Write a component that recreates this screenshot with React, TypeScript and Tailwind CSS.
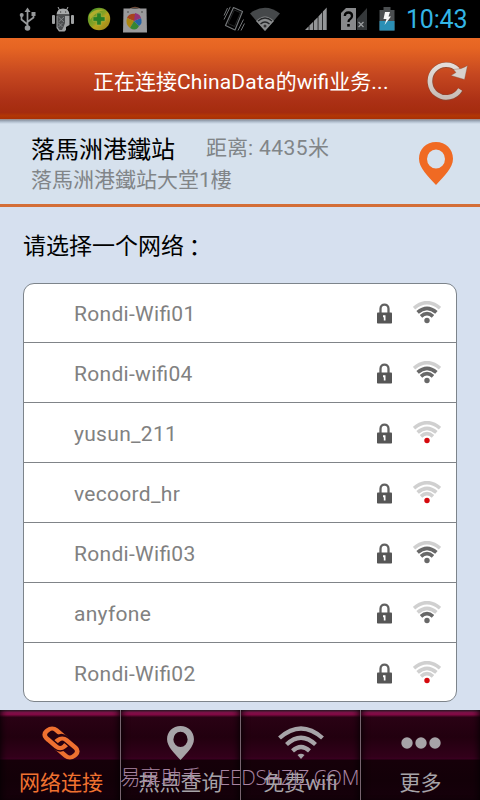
import React from "react";

const FONT = "font-[Roboto,'Noto_Sans_CJK_SC',sans-serif]";
const FONT_TC = "font-[Roboto,'Noto_Sans_CJK_TC',sans-serif]";

const networks = [
  { name: "Rondi-Wifi01", level: 3 },
  { name: "Rondi-wifi04", level: 3 },
  { name: "yusun_211", level: 0 },
  { name: "vecoord_hr", level: 0 },
  { name: "Rondi-Wifi03", level: 3 },
  { name: "anyfone", level: 2 },
  { name: "Rondi-Wifi02", level: 0 },
];

function UsbIcon() {
  return (
    <svg width="18" height="26" viewBox="0 0 18 26" fill="none" stroke="#96989a" strokeWidth="1.7">
      <path d="M8.5 5V22M2.5 10V13.5L8.5 18.5M14.5 8V11.5L8.5 16" />
      <path d="M8.5 1.5L11.5 6H5.500Z" fill="#96989a" stroke="none" />
      <circle cx="2.700" cy="9" r="2" fill="#96989a" stroke="none" />
      <rect x="12.500" y="6" width="4" height="4" fill="#96989a" stroke="none" />
      <circle cx="8.500" cy="22" r="2.800" fill="#96989a" stroke="none" />
    </svg>
  );
}

function AndroidIcon() {
  return (
    <svg width="24" height="28" viewBox="0 0 24 28">
      <path d="M7 2L8.500 5M17 2L15.500 5" stroke="#a8aaab" />
      <path d="M5.500 9.500Q6 3.500 12 3.500T18.500 9.500Z" fill="#a8aaab" />
      <path d="M5.500 10.500H18.500V20L15 22V25L13.500 26.500H8L5.500 23Z" fill="#a0a2a3" />
      <path d="M6.500 11H14V18L12.500 22L11 25H8.500L6.500 22Z" fill="#4b4d4f" />
      <path d="M7.500 12l5.500 5m0-5l-5.500 5m0 1l4 4m0-4l-4 4" stroke="#8c8f91" strokeWidth=".8" />
      <rect x="1" y="10" width="3" height="9" rx="1" fill="#a0a2a3" />
      <rect x="20" y="10" width="3" height="9" rx="1" fill="#a0a2a3" />
      <path d="M9 7h1.200M14 7h1.200" stroke="#333" />
    </svg>
  );
}

function SecurityIcon() {
  return (
    <svg width="24" height="24" viewBox="0 0 24 24">
      <defs>
        <linearGradient id="sec" x1="0" y1="0" x2="1" y2="1">
          <stop offset="0" stopColor="#3d8e28" />
          <stop offset=".48" stopColor="#88a224" />
          <stop offset=".58" stopColor="#b9a31e" />
          <stop offset="1" stopColor="#948019" />
        </linearGradient>
      </defs>
      <circle cx="12" cy="12" r="11.200" fill="url(#sec)" />
      <path d="M2 8Q8 1 18 3Q9 4 3 13Z" fill="#b0ad2d" />
      <path d="M9.700 6H14.300V9.700H18V14.300H14.300V18H9.700V14.300H6V9.700H9.700Z" fill="#298025" stroke="#b9b841" strokeWidth=".6" />
    </svg>
  );
}

function StoreIcon() {
  return (
    <svg width="26" height="28" viewBox="0 0 26 28">
      <path d="M8 4Q13 .8 18 4" fill="none" stroke="#6d4a38" strokeWidth="1.400" />
      <path d="M1.500 3.500H24.500L25 27.500H1Z" fill="#9a9a9c" />
      <circle cx="6" cy="7" r="1" fill="#666" /><circle cx="20" cy="7" r="1" fill="#666" />
      <path d="M12 16L5 13Q7 8 14 9L18 11Z" fill="#a8431d" />
      <path d="M12 16L5 13Q3 19 8 23Z" fill="#ad8710" />
      <path d="M12 16L8 23Q14 27 17 21Z" fill="#368633" />
      <path d="M12 16L17 21Q21 18 19 13Z" fill="#2562a3" />
      <path d="M12 16L19 13Q18 9 13 8Z" fill="#923277" />
    </svg>
  );
}

function VibrateIcon() {
  return (
    <svg width="24" height="26" viewBox="0 0 24 26" fill="none" stroke="#727577" strokeWidth="1.200" strokeLinejoin="round">
      <path d="M11.500 1.500L20.500 5.500L13 24L3.500 19.500Z" />
      <path d="M12.300 4L18.500 6.700L12.500 20.500L6 17.500Z" stroke="#2c2e2f" strokeWidth=".8" />
      <path d="M2 9.500L5.500 2M2 13.500L8.300 .8M16 24.500L21.500 13.500M19 24.500L22.500 17.500" strokeWidth="1" />
    </svg>
  );
}

function StatusWifi() {
  return (
    <svg width="32" height="25" viewBox="0 0 32 25">
      <path d="M1 6.500Q16 -5 31 6.500L16 24Z" fill="#45484a" />
      <path d="M7 14Q16 5 25 14L16 24Z" fill="#8b8d8e" />
      <path d="M9 14Q16 8 23 14M11.500 17Q16 13 20.500 17" stroke="#242628" fill="none" strokeWidth="1.400" />
      <circle cx="16" cy="19" r="1.500" fill="#333" />
    </svg>
  );
}

function SignalIcon() {
  return (
    <svg width="22" height="24" viewBox="0 0 22 24" fill="#949698">
      <path d="M0 23L3.700 19.300V23ZM4.400 18.600L8.200 14.800V23H4.400ZM8.900 14L12.700 10.200V23H8.900ZM13.400 9.500L17.200 5.300V23H13.400ZM17.900 4.500L21.700 .5V23H17.900Z" />
    </svg>
  );
}

function SimIcon() {
  return (
    <svg width="27" height="24" viewBox="0 0 27 24">
      <path d="M5 1H15V23H0V6Z" fill="#88898b" />
      <path d="M26 1V23H16V12Z" fill="#35383a" />
      <path d="M3.800 9Q4 5.500 7.500 5.500T11 9Q11 11 9 12.300Q7.500 13 7.500 15" fill="none" stroke="#050505" strokeWidth="2.300" />
      <rect x="6.200" y="17" width="2.600" height="2.600" fill="#050505" />
      <path d="M17.500 15L22.500 20M22.500 15L17.500 20" stroke="#9b9d9f" strokeWidth="1.300" />
    </svg>
  );
}

function BatteryIcon() {
  return (
    <svg width="16" height="24" viewBox="0 0 16 24">
      <path d="M4.500 0H11.500V3H15.500V23.500H.5V3H4.500Z" fill="#4b4e50" />
      <path d="M.5 14H15.500V23.500H.5Z" fill="#2b8fb5" />
      <path d="M6 5H11L9.500 9.500H12L5.500 18L7.500 12H4.500Z" fill="#f7f7f7" />
    </svg>
  );
}

function RefreshIcon() {
  return (
    <svg width="42" height="42" viewBox="0 0 42 42">
      <defs>
        <linearGradient id="silver" x1="0" y1="0" x2="0" y2="1">
          <stop offset="0" stopColor="#e4deda" />
          <stop offset="1" stopColor="#c8beb8" />
        </linearGradient>
      </defs>
      <path d="M33.500 29.500A16.300 16.300 0 1 1 30.500 9.300" fill="none" stroke="#7c5040" strokeOpacity=".6" strokeWidth="6" />
      <path d="M33.200 29.500A16.300 16.300 0 1 1 31 9.800" fill="none" stroke="url(#silver)" strokeWidth="4.600" />
      <path d="M40.500 5.500L37.500 19.500L24 15.500L29 12.500L26.500 9.500Q35 9.500 40.500 5.500Z" fill="#d8d2cd" stroke="#7c5040" strokeOpacity=".5" strokeWidth=".7" />
    </svg>
  );
}

function PinIcon({ className }: { className: string }) {
  return (
    <svg viewBox="0 0 34 43" className={className} fill="currentColor">
      <path fillRule="evenodd" d="M17 0C7.200 0 0 7.200 0 16.700C0 26 9 34 17 43C25 34 34 26 34 16.700C34 7.200 26.800 0 17 0ZM17 7.400A9 9.600 0 1 1 17 26.600A9 9.600 0 1 1 17 7.400Z" />
    </svg>
  );
}

function LockIcon() {
  return (
    <svg width="15" height="21" viewBox="0 0 15 21">
      <path d="M3.500 11V5.800C3.500 .2 11.500 .2 11.500 5.800V11" fill="none" stroke="#626262" strokeWidth="2.300" />
      <rect x="0" y="9.500" width="15" height="11" rx=".8" fill="#565656" />
      <path d="M6 12.200H8.500V17.500H6.800V14.200H6Z" fill="#fff" />
    </svg>
  );
}

function WifiLevel({ level }: { level: number }) {
  const on = "#686868";
  const off = "#d0d0d0";
  return (
    <svg width="28" height="25" viewBox="0 0 28 25" fill="none">
      <path d="M1 7.200Q14 -3.800 27 7.200" stroke={off} strokeWidth="3.600" />
      <path d="M4.600 11.400Q14 3.200 23.400 11.400" stroke={level > 2 ? on : off} strokeWidth="3.700" />
      <path d="M8 15.400Q14 9.800 20 15.400" stroke={level > 1 ? on : off} strokeWidth="3.600" />
      <circle cx="14" cy="19.500" r="2.700" fill={level > 0 ? on : "#d5090d"} />
    </svg>
  );
}

function LinkIcon() {
  return (
    <svg width="38" height="36" viewBox="0 0 38 36" fill="none" stroke="#ee7030" strokeWidth="4.300">
      <g transform="translate(19 18) scale(1.14 .97) rotate(45) translate(-19 -18)">
        <rect x="1.500" y="11.500" width="22" height="12" rx="5" />
        <path d="M14 13.500V17Q14 12.500 19 12.500H31" stroke="#260010" strokeWidth="7" />
        <rect x="15" y="12.500" width="21.500" height="12" rx="5" />
        <path d="M23.500 17.500V19Q23.500 23.500 18.500 23.500H9" stroke="#260010" strokeWidth="6.800" />
        <path d="M23.500 16.500V18.500Q23.500 23.500 18.500 23.500H8" />
      </g>
    </svg>
  );
}

function NavWifi() {
  return (
    <svg width="46" height="34" viewBox="0 0 46 34" fill="none" stroke="#a7a4a8" strokeWidth="4.300">
      <path d="M1.500 12Q23 -7 44.500 12M8.500 18.500Q23 5 37.500 18.500M14.500 24.800Q23 17 31.500 24.800" />
      <path d="M19.500 29Q23 26.500 26.500 29L23 33Z" fill="#a7a4a8" stroke="none" />
    </svg>
  );
}

function DotsIcon() {
  return (
    <svg width="40" height="12" viewBox="0 0 40 12" fill="#a7a4a8">
      <circle cx="6" cy="6" r="5.700" /><circle cx="20" cy="6" r="5.700" /><circle cx="34" cy="6" r="5.700" />
    </svg>
  );
}

const tabs = [
  { label: "网络连接", icon: <LinkIcon />, active: true },
  { label: "热点查询", icon: <PinIcon className="h-[34px] w-[27px] text-[#a7a4a8]" />, active: false },
  { label: "免费wifi", icon: <NavWifi />, active: false },
  { label: "更多", icon: <DotsIcon />, active: false },
];

export default function App() {
  return (
    <div className={`flex h-[800px] w-[480px] flex-col overflow-hidden bg-[#d6e0ef] ${FONT}`}>
      <div className="flex h-[38px] shrink-0 items-center justify-between bg-black pl-[19px] pr-[13px]">
        <div className="flex items-center">
          <UsbIcon />
          <div className="ml-[14px]"><AndroidIcon /></div>
          <div className="ml-[12px]"><SecurityIcon /></div>
          <div className="ml-[11px]"><StoreIcon /></div>
        </div>
        <div className="flex items-center">
          <VibrateIcon />
          <div className="ml-[3px]"><StatusWifi /></div>
          <div className="ml-[24px]"><SignalIcon /></div>
          <div className="ml-[14px]"><SimIcon /></div>
          <div className="ml-[11px]"><BatteryIcon /></div>
          <span className="ml-[11px] w-[61px] whitespace-nowrap pt-[2px] text-[25px] leading-[36px] tracking-[-0.2px] text-[#33b5e5]">10:43</span>
        </div>
      </div>

      <header className="flex h-[81px] shrink-0 items-center bg-[linear-gradient(to_bottom,#eb6a25_0%,#e66523_12%,#c54720_45%,#ab3015_78%,#a52c0e_92%,#b23705_96%,#a83004_100%)] pl-[93px] pr-[11px]">
        <h1 className="grow whitespace-nowrap pt-[7px] text-[21px] leading-[28px] text-white">
          正在连接<span className="tracking-[0.2px]">ChinaData</span>的wifi业务<span className="tracking-[0.3px]">...</span>
        </h1>
        <div className="pt-[4px]"><RefreshIcon /></div>
      </header>
      <div className="h-[5px] shrink-0 bg-[linear-gradient(to_bottom,#a7887d,#929ba9_25%,#b4c1d0_60%,#d6e1ed)]" />

      <section className="flex h-[83px] shrink-0 justify-between border-b-[3px] border-[#d46e37] bg-[#d6e1ed] pl-[31px] pr-[27px]">
        <div className={`pt-[10px] ${FONT_TC}`}>
          <div className="flex h-[32px] items-start whitespace-nowrap">
            <span className="w-[175px] text-[24px] leading-[32px] text-black">落馬洲港鐵站</span>
            <span className={`text-[21px] leading-[28px] text-[#818588] ${FONT}`}>距离<span className="tracking-[0.4px]">: 4435</span>米</span>
          </div>
          <p className="text-[21px] leading-[28px] text-[#818588]">落馬洲港鐵站大堂1樓</p>
        </div>
        <PinIcon className="mt-[18px] h-[43px] w-[34px] text-[#f06a23]" />
      </section>

      <h2 className="flex h-[76px] shrink-0 pl-[23px] pt-[25px] text-[23px] leading-[30px] text-black">
        请选择一个网络<span className={`-ml-px pt-[2px] ${FONT_TC}`}>：</span>
      </h2>

      <ul className="mx-[23px] h-[419px] shrink-0 overflow-hidden rounded-[11px] border border-[#7d848b] bg-white">
        {networks.map((n, i) => (
          <li key={n.name} className={`flex h-[60px] items-center border-b pl-[50px] pr-[15px] pt-px ${i < 6 ? "border-[#808488]" : "border-transparent"} ${i === 0 ? "-mt-px" : ""}`}>
            <span className="grow pt-px text-[21px] leading-[28px] tracking-[0.3px] text-[#818181] [font-feature-settings:'liga']">{n.name}</span>
            <LockIcon />
            <div className="ml-[21px]"><WifiLevel level={n.level} /></div>
          </li>
        ))}
      </ul>

      <nav className="relative mt-auto grid h-[90px] shrink-0 grid-cols-4 bg-[linear-gradient(to_bottom,#37202f_0%,#85124b_3%,#830b45_5%,#2a0214_8%,#22000f_30%,#32001a_52%,#390020_54%,#160009_56%,#130008_78%,#16000b_100%)]">
        {tabs.map((t, i) => (
          <div key={t.label} className={`flex flex-col items-center shadow-[inset_5px_0_7px_-4px_#050003,inset_-5px_0_7px_-4px_#050003] ${i ? "border-l border-[#77636e]" : "pl-[2px]"}`}>
            <div className="flex h-[57px] items-center pt-[9px]">{t.icon}</div>
            <span className={`whitespace-nowrap pt-px text-[21px] leading-[30px] ${t.active ? "text-[#f07230]" : "text-[#a7a4a8]"}`}>{t.label}</span>
          </div>
        ))}
        <div className="absolute left-[120px] top-[53px] flex whitespace-nowrap text-[20.5px] leading-[28px] text-[#a884a2] font-['Open_Sans','Noto_Sans_CJK_SC',sans-serif] font-light">
          易享助手<span className="w-[17px] text-center">·</span><span className="tracking-[-0.2px]">EEDSHZJZ.COM</span>
        </div>
      </nav>
    </div>
  );
}
